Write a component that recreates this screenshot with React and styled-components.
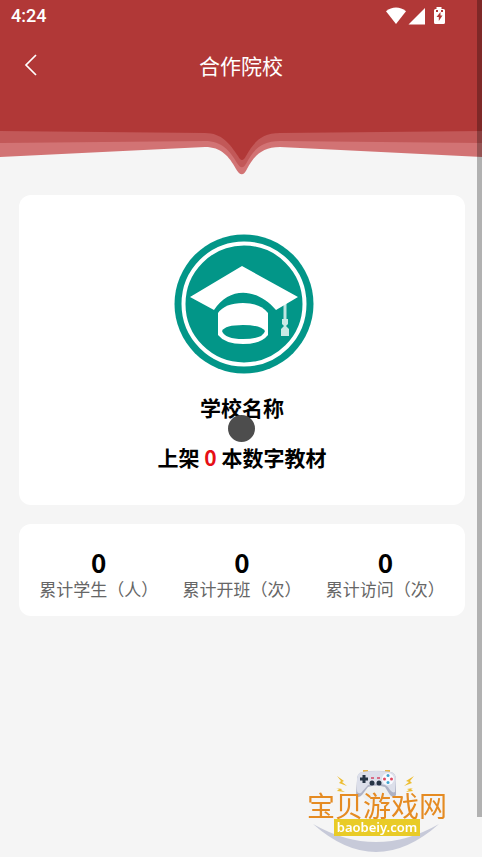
import React from "react";
import styled, { createGlobalStyle } from "styled-components";

const stats = [
  { label: "累计学生（人）", value: 0 },
  { label: "累计开班（次）", value: 0 },
  { label: "累计访问（次）", value: 0 },
];

function StatusIcons() {
  return (
    <svg width="62" height="20" viewBox="386 6 62 20" fill="#fff" aria-hidden="true">
      <path d="M386 11.2C392 6.2 400 6.2 406 11.2L396 24Z" />
      <path d="M425 8V24.5H408.5Z" />
      <path
        fillRule="evenodd"
        d="M436.5 7H441.5V9H443.5Q445 9 445 10.5V22.5Q445 24 443.5 24H435.5Q434 24 434 22.5V10.5Q434 9 435.5 9H436.5ZM440.5 12L436.5 17H438.8V21L442.5 15.5H440.5ZM436 10V12H438V10ZM441 10V12H443V10Z"
      />
    </svg>
  );
}

function BookEdge() {
  return (
    <Wave viewBox="0 0 482 46" preserveAspectRatio="none" aria-hidden="true">
      <path
        fill="#d27374"
        d="M0 0H482V27L280 17C262 17 254 26 247 39Q242 49.5 236 39C229 26 221 17 205 17L0 27Z"
      />
      <path
        fill="#c25858"
        d="M0 0H482V13L280 11C260 11 253 21 246.5 33Q242 41.5 237 33C230 21 222 11 205 11L0 13Z"
      />
      <path
        fill="#b13837"
        d="M0 0H482V1L280 3C260 3 253 14 246 26Q242 34 238 26C230 14 222 3 205 3L0 1Z"
      />
    </Wave>
  );
}

function SchoolLogo() {
  return (
    <Logo viewBox="0 0 144 142" role="img" aria-label="学校">
      <circle cx="74" cy="71" r="69.5" fill="#029688" />
      <circle cx="74" cy="71" r="60.5" fill="none" stroke="#fff" strokeWidth="4" />
      <path fill="#fff" d="M72 33L128 64L106 77C86 54 59 54 44 77L20 64Z" />
      <path
        fill="#fff"
        d="M48 80Q55 70 73 70Q90 70 98 80V102Q91 111 73 111Q55 111 48 102Z"
      />
      <path
        fill="#029688"
        d="M52 98Q55 92 73 92Q91 92 95 98Q93 106 73 106Q55 106 52 98Z"
      />
      <path d="M115 70V86" stroke="#fff" strokeWidth="3" opacity=".75" />
      <path fill="#c9e9e5" d="M112 86H118V91L116 93L119 96V103H111V96L114 93L112 91Z" />
    </Logo>
  );
}

function WatermarkArt() {
  return (
    <Art viewBox="0 0 142 90" aria-hidden="true">
      <circle cx="71" cy="20" r="17" fill="#eef0f0" />
      <path fill="#c7cad9" d="M7 57Q70 113 133 57Q70 93 7 57Z" />
      <path d="M57 4H62M79 4H84" stroke="#e7b64b" strokeWidth="2" />
      <path
        fill="#aeb2c5"
        d="M56 5Q70 3 85 5Q90 6 90 13L90 28Q88 32 84 28L79 20Q70 17 62 20L56 28Q52 32 50 28L51 13Q51 6 56 5Z"
      />
      <path
        fill="#dcdfea"
        d="M56 5Q70 3 85 5Q90 6 90 13L89 25Q86 27 82 20L79 18Q70 15 62 18L55 26Q51 27 51 23V12Q51 6 56 5Z"
      />
      <path d="M54 12H62M58 8V16" stroke="#263545" strokeWidth="3" />
      <g fill="#263545">
        <circle cx="66" cy="16" r="2.5" />
        <circle cx="73" cy="16" r="2.5" />
      </g>
      <circle cx="82" cy="12" r="6" fill="#f8faff" />
      <circle cx="78.5" cy="12" r="1.5" fill="#e04a61" />
      <circle cx="85.5" cy="12" r="1.5" fill="#e04a61" />
      <circle cx="82" cy="8.5" r="1.5" fill="#40a6d1" />
      <circle cx="82" cy="15.5" r="1.5" fill="#40a6d1" />
      <path d="M65 11H68M71 11H74" stroke="#d54865" strokeWidth="1.5" />
      <g fill="#edbd31">
        <path d="M31 9L38 14L36 15L41 19L33 16L35 14Z" />
        <path d="M30 21L36 22L35 23L39 25L31 24L33 22Z" />
        <path d="M108 9L100 14L103 15L98 19L106 16L104 14Z" />
        <path d="M107 21L101 22L103 23L100 25L107 24L105 22Z" />
      </g>
    </Art>
  );
}

function App() {
  return (
    <Page>
      <GlobalStyle />
      <Header>
        <StatusBar>
          <span>4:24</span>
          <StatusIcons />
        </StatusBar>
        <NavBar>
          <BackButton type="button" aria-label="返回">
            <svg width="14" height="24" viewBox="0 0 14 24" fill="none" aria-hidden="true">
              <path d="M12 2L2 12L12 22" stroke="#fff" strokeWidth="1.7" />
            </svg>
          </BackButton>
          <Title>合作院校</Title>
        </NavBar>
      </Header>
      <BookEdge />
      <Content>
        <SchoolCard>
          <SchoolLogo />
          <SchoolLine>学校名称</SchoolLine>
          <SchoolLine>
            上架 <Count>0</Count> 本数字教材
          </SchoolLine>
          <TouchDot />
        </SchoolCard>
        <StatsCard>
          {stats.map(item => (
            <Stat key={item.label}>
              <StatValue>{item.value}</StatValue>
              <StatLabel>{item.label}</StatLabel>
            </Stat>
          ))}
        </StatsCard>
      </Content>
      <Watermark>
        <WatermarkArt />
        <WatermarkName>宝贝游戏网</WatermarkName>
        <WatermarkSite>baobeiy.com</WatermarkSite>
      </Watermark>
      <ScrollThumb />
    </Page>
  );
}

const GlobalStyle = createGlobalStyle`
  * {
    box-sizing: border-box;
  }
  body {
    margin: 0;
    background: #f5f5f5;
    font-family: "Noto Sans CJK SC", sans-serif;
  }
`;
const Page = styled.div`
  position: relative;
  min-height: 100vh;
  overflow: hidden;
  color: #000;
`;
const Header = styled.header`
  background: #b13837;
  color: #fff;
  padding-bottom: 32px;
`;
const StatusBar = styled.div`
  display: flex;
  align-items: center;
  justify-content: space-between;
  height: 32px;
  padding: 0 34px 0 11px;
  font: 500 18px/32px Roboto, sans-serif;
`;
const NavBar = styled.div`
  display: grid;
  grid-template-columns: 48px 1fr 48px;
  align-items: center;
  height: 66px;
`;
const BackButton = styled.button`
  display: flex;
  align-items: center;
  justify-content: flex-end;
  height: 48px;
  padding: 0 10px 0 0;
  border: 0;
  background: none;
  cursor: pointer;
`;
const Title = styled.h1`
  margin: 0;
  font-size: 21px;
  font-weight: 400;
  line-height: 32px;
  text-align: center;
`;
const Wave = styled.svg`
  display: block;
  width: 100%;
  height: 46px;
`;
const Content = styled.main`
  display: flex;
  flex-direction: column;
  gap: 19px;
  padding: 19px 17px 19px 19px;
`;
const Card = styled.section`
  background: #fff;
  border-radius: 12px;
`;
const SchoolCard = styled(Card)`
  position: relative;
  display: flex;
  flex-direction: column;
  align-items: center;
  gap: 18px;
  padding: 38px 0 32px;
`;
const Logo = styled.svg`
  width: 144px;
  height: 142px;
  margin-bottom: -2px;
`;
const SchoolLine = styled.p`
  margin: 0;
  font-size: 21px;
  font-weight: 700;
  line-height: 32px;
`;
const Count = styled.span`
  color: #e60f16;
`;
const TouchDot = styled.span`
  position: absolute;
  top: 220px;
  left: 50%;
  width: 27px;
  height: 27px;
  margin-left: -14px;
  border-radius: 50%;
  background: #4d4d4d;
`;
const StatsCard = styled(Card)`
  display: grid;
  grid-template-columns: repeat(3, 1fr);
  padding: 24px 8px 14px;
`;
const Stat = styled.div`
  text-align: center;
`;
const StatValue = styled.div`
  font-size: 26px;
  font-weight: 700;
  line-height: 28px;
`;
const StatLabel = styled.div`
  color: #666;
  font-size: 17px;
  line-height: 26px;
  white-space: nowrap;
`;
const Watermark = styled.div`
  position: fixed;
  right: 34px;
  bottom: 0;
  display: flex;
  flex-direction: column;
  align-items: center;
  width: 142px;
  height: 90px;
  padding-top: 24px;
`;
const Art = styled.svg`
  position: absolute;
  top: 0;
  left: 0;
  width: 142px;
  height: 90px;
`;
const WatermarkName = styled.span`
  position: relative;
  color: #e58b22;
  font-size: 28px;
  font-weight: 400;
  line-height: 28px;
  white-space: nowrap;
`;
const WatermarkSite = styled.span`
  position: relative;
  padding: 0 3px;
  background: #e9cb27;
  color: #fff;
  font: 600 13px/17px "Noto Sans", sans-serif;
`;
const ScrollThumb = styled.div`
  position: fixed;
  top: 0;
  right: 0;
  bottom: 40px;
  width: 5px;
  background: rgba(0, 0, 0, 0.28);
`;

export default App;
